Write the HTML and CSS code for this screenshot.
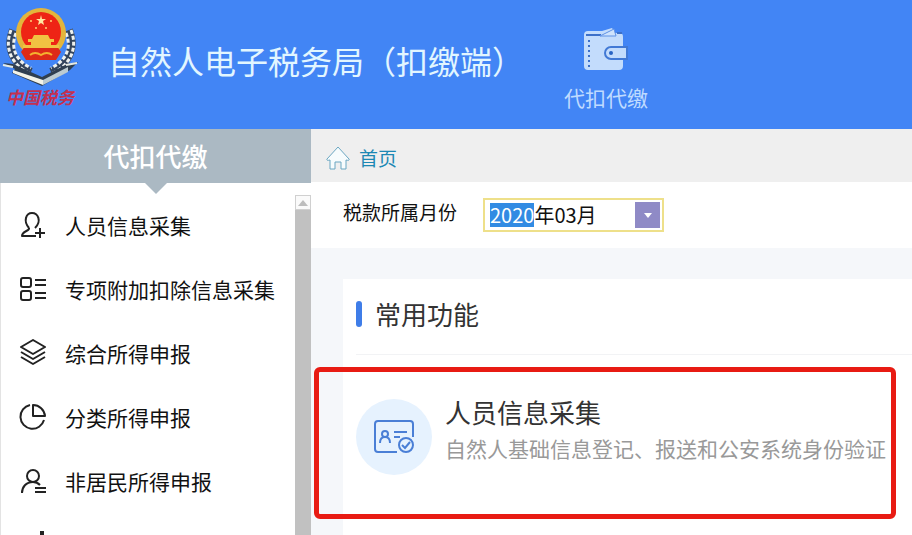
FILE: index.html
```html
<!DOCTYPE html>
<html lang="zh-CN">
<head>
    <meta charset="UTF-8">
    <meta name="viewport" content="width=device-width, initial-scale=1.0">
    <title>自然人电子税务局（扣缴端）</title>
    <link rel="stylesheet" href="styles.css">
</head>
<body>
    <div class="app">
        <header class="header">
            <div class="logo">
                <svg class="emblem" viewBox="0 0 78 82" aria-hidden="true">
                    <!-- Wheat wreath -->
                    <g fill="none" stroke="#33445c" stroke-width="8">
                        <path d="M12 26C5 44 12 60 30 68"/>
                        <path d="M68 26C75 44 68 60 50 68"/>
                    </g>
                    <g fill="none" stroke="#eef1ee" stroke-width="3" stroke-dasharray="4 2">
                        <path d="M10 26C3 44 10 61 30 70"/>
                        <path d="M70 26C77 44 70 61 50 70"/>
                        <path d="M15 29C9 44 15 57 30 64"/>
                        <path d="M65 29C71 44 65 57 50 64"/>
                    </g>
                    <!-- Book -->
                    <path d="M2 59l10 1 29 13 25-13 11-2-8 8-28 16L11 69l3-4z" fill="#2f3f50"/>
                    <path d="M12 66l30 10v5L12 69z" fill="#f3f3e8"/>
                    <path d="M42 76l25-13v5L42 81z" fill="#bccbd1"/>
                    <path d="M2 61l10 2M65 61l11-2" stroke="#e4eae4" stroke-width="2"/>
                    <!-- National emblem -->
                    <circle cx="40" cy="29" r="25" fill="#e3b53c"/>
                    <circle cx="40" cy="28" r="20" fill="#ee2415"/>
                    <path d="M20 48l4-6h32l4 6-5 8H25z" fill="#dd2a18"/>
                    <path d="M40 11l1 4h4l-3 2 1 4-3-2-3 2 1-4-3-2h4z" fill="#ffe7a2"/>
                    <g fill="#ffd277">
                        <circle cx="30" cy="17" r="1"/>
                        <circle cx="50" cy="17" r="1"/>
                        <circle cx="35" cy="24" r="1"/>
                        <circle cx="45" cy="24" r="1"/>
                    </g>
                    <path d="M33 31h14l2 4h4v3h-3v3h8v3H22v-3h8v-3h-3v-3h4z" fill="#f1c342"/>
                    <path d="M29 51q5-4 11 0 6-4 11 0" fill="none" stroke="#f4b32f" stroke-width="2"/>
                </svg>
                <span class="logo-text">中国税务</span>
            </div>
            <h1 class="title">自然人电子税务局（扣缴端）</h1>
            <a class="module" href="#">
                <svg width="44" height="42" viewBox="0 0 44 42" aria-hidden="true">
                    <path d="M4 2h14l10-3 3 5h5q3 0 3 4v29q0 4-4 4H4q-4 0-4-4V6q0-4 4-4z" fill="#c3dcfc"/>
                    <path d="M2 6h15M33 4h5" stroke="#3c70c9" stroke-width="2"/>
                    <path d="M16 7l14-7 2 7z" fill="#cfe3fc" stroke="#5f92e6"/>
                    <path d="M5 11v27" stroke="#3c70c9" stroke-width="2" stroke-dasharray="2 3"/>
                    <path d="M43 18H27a6 6 0 0 0 0 12h16z" fill="#c3dcfc" stroke="#4179d5" stroke-width="2"/>
                    <circle cx="27" cy="24" r="2" fill="#2864c4"/>
                </svg>
                <span>代扣代缴</span>
            </a>
        </header>

        <div class="body">
            <!-- Left menu -->
            <aside class="sidebar">
                <h2 class="sidebar-title">代扣代缴</h2>
                <div class="sidebar-body">
                    <nav class="menu">
                        <a class="menu-item" href="#">
                            <svg class="menu-icon" viewBox="0 0 28 28" aria-hidden="true">
                                <path d="M10 17C4 10 7 2 13 2s10 8 3 15M10 17c1 3-7 3-7 8h14M21 17v10M16 22h10"/>
                            </svg>
                            人员信息采集
                        </a>
                        <a class="menu-item" href="#">
                            <svg class="menu-icon" viewBox="0 0 28 28" aria-hidden="true">
                                <rect x="2" y="3" width="10" height="9" rx="2"/>
                                <rect x="2" y="16" width="10" height="9" rx="2"/>
                                <path d="M16 5h11M16 10h11M16 18h11M16 23h11"/>
                            </svg>
                            专项附加扣除信息采集
                        </a>
                        <a class="menu-item" href="#">
                            <svg class="menu-icon" viewBox="0 0 28 28" aria-hidden="true">
                                <path d="M14 1l12 7-12 7L2 8zM2 13l12 7 12-7M2 18l12 7 12-7"/>
                            </svg>
                            综合所得申报
                        </a>
                        <a class="menu-item" href="#">
                            <svg class="menu-icon" viewBox="0 0 28 28" aria-hidden="true">
                                <path d="M11 2a12 12 0 1 0 14 15M14 2v11h12A12 12 0 0 0 14 2z"/>
                            </svg>
                            分类所得申报
                        </a>
                        <a class="menu-item" href="#">
                            <svg class="menu-icon" viewBox="0 0 28 28" aria-hidden="true">
                                <circle cx="14" cy="9" r="6"/>
                                <path d="M3 26c0-6 4-11 11-11 3 0 5 1 7 3M16 21h11M16 25h11"/>
                            </svg>
                            非居民所得申报
                        </a>
                        <a class="menu-item" href="#">
                            <svg class="menu-icon" viewBox="0 0 28 28" aria-hidden="true">
                                <path d="M23 0v26M15 9v17M7 14v12" stroke-width="4"/>
                            </svg>
                            限售股所得申报
                        </a>
                    </nav>
                    <div class="scrollbar">
                        <button class="scroll-up" type="button" aria-label="向上滚动"></button>
                    </div>
                </div>
            </aside>

            <!-- Main area -->
            <main class="main">
                <div class="breadcrumb">
                    <a href="#">
                        <svg width="26" height="26" viewBox="0 0 26 26" aria-hidden="true">
                            <path d="M13 2L2 14q-1 2 3 1v9h5v-7h6v7h5v-9q4 1 3-1z" fill="#f7fcfd" stroke="#6ba7c2"/>
                        </svg>
                        首页
                    </a>
                </div>
                <form class="filter">
                    <label for="period">税款所属月份</label>
                    <div class="picker">
                        <input id="period" type="text" value="2020年03月" autocomplete="off" spellcheck="false">
                        <button class="picker-btn" type="button" aria-label="选择月份"></button>
                    </div>
                </form>
                <section class="card">
                    <h2 class="card-title">常用功能</h2>
                    <a class="feature" href="#">
                        <span class="feature-icon">
                            <svg width="40" height="34" viewBox="0 0 40 34" fill="none" stroke="#4a7fd6" stroke-width="2" aria-hidden="true">
                                <path d="M23 32H4q-3 0-3-3V4q0-3 3-3h32q3 0 3 3v13"/>
                                <circle cx="11" cy="14" r="3"/>
                                <path d="M6 23c0-4 2-6 5-6s5 2 5 6M20 12h13M20 17h6"/>
                                <circle cx="32" cy="25" r="7"/>
                                <path d="M28 25l3 3 5-6"/>
                            </svg>
                        </span>
                        <span class="feature-text">
                            <strong>人员信息采集</strong>
                            <span>自然人基础信息登记、报送和公安系统身份验证</span>
                        </span>
                    </a>
                </section>
            </main>
        </div>
    </div>

    <script>
        // start on the year part of the period
        const period = document.getElementById('period');
        period.focus();
        period.setSelectionRange(0, 4);
    </script>
</body>
</html>
```
FILE: styles.css
```css
* {
    box-sizing: border-box;
}

body {
    margin: 0;
    font-family: "Noto Sans CJK SC", sans-serif;
    color: #111;
    background: #f5f7fa;
    overflow: hidden;
}

h1,
h2 {
    margin: 0;
    font-weight: normal;
}

a {
    color: inherit;
    text-decoration: none;
}

.app {
    display: flex;
    flex-direction: column;
    height: 100vh;
}

/* Header */
.header {
    display: flex;
    flex: none;
    align-items: flex-start;
    height: 129px;
    background: #4285f5;
    color: #e2f6ff;
}

.logo {
    display: flex;
    flex-direction: column;
    align-items: center;
    width: 80px;
    padding-top: 4px;
}

.emblem {
    width: 78px;
    height: 82px;
}

.logo-text {
    font-family: "Liberation Serif", "Noto Sans CJK SC", serif;
    font-size: 17px;
    font-style: italic;
    font-weight: bold;
    line-height: 26px;
    color: #c4304f;
}

.title {
    padding: 36px 0 0 28px;
    font-size: 32px;
    line-height: 48px;
    white-space: nowrap;
}

.module {
    display: flex;
    flex-direction: column;
    align-items: center;
    gap: 11px;
    padding-top: 29px;
    margin-left: 40px;
    font-size: 21px;
    line-height: 30px;
    color: #bfdbff;
}

.module svg {
    overflow: visible;
}

.body {
    display: flex;
    flex: 1;
    min-height: 0;
}

/* Left menu */
.sidebar {
    display: flex;
    flex: none;
    flex-direction: column;
    width: 311px;
    background: #fff;
}

.sidebar-title {
    position: relative;
    flex: none;
    font-size: 26px;
    font-weight: 500;
    line-height: 54px;
    text-align: center;
    color: #fff;
    background: #abb9c3;
}

.sidebar-title::after {
    content: "";
    position: absolute;
    top: 100%;
    left: 50%;
    border: 11px solid transparent;
    border-top-color: #abb9c3;
    border-bottom: 0;
    transform: translateX(-50%);
}

.sidebar-body {
    display: flex;
    flex: 1;
    min-height: 0;
    padding-top: 12px;
    border-left: 1px solid #e3e3e3;
    overflow: hidden;
}

.menu {
    flex: 1;
    margin-top: -2px;
}

.menu-item {
    display: flex;
    align-items: center;
    gap: 18px;
    height: 64px;
    padding-left: 18px;
    font-size: 21px;
    white-space: nowrap;
}

.menu-icon {
    width: 28px;
    height: 28px;
    fill: none;
    stroke: #222;
    stroke-width: 2;
    stroke-linejoin: round;
}

.scrollbar {
    width: 16px;
    background: #c1c1c1;
}

.scroll-up {
    display: flex;
    align-items: center;
    justify-content: center;
    width: 16px;
    height: 15px;
    padding: 0;
    border: 1px solid #d0d0d0;
    background: #fafafa;
}

.scroll-up::before {
    content: "";
    border: 5px solid transparent;
    border-top: 0;
    border-bottom: 6px solid #bdbdbd;
}

/* Main area */
.main {
    flex: 1;
    min-width: 0;
}

.breadcrumb {
    display: flex;
    align-items: center;
    height: 53px;
    padding: 4px 14px 0;
    background: #efefef;
}

.breadcrumb a {
    display: flex;
    align-items: center;
    gap: 8px;
    font-size: 19px;
    color: #1c88b4;
}

.filter {
    display: flex;
    gap: 26px;
    padding: 16px 32px;
    background: #fff;
}

.filter label {
    font-size: 19px;
    line-height: 28px;
}

.picker {
    display: flex;
    align-items: center;
    width: 181px;
    height: 34px;
    padding: 2px;
    border: 2px solid #eee08a;
    background: #fff;
}

.picker input {
    flex: 1;
    width: 0;
    padding: 0 3px;
    border: 0;
    outline: 0;
    font-family: inherit;
    font-size: 20px;
    line-height: 24px;
    color: #111;
}

.picker input::selection {
    color: #fff;
    background: #318be3;
}

.picker-btn {
    display: flex;
    align-items: center;
    justify-content: center;
    width: 25px;
    height: 26px;
    padding: 0;
    border: 0;
    background: #8f8ac6;
}

.picker-btn::before {
    content: "";
    border: 4px solid transparent;
    border-top: 5px solid #fff;
    border-bottom: 0;
}

/* Common functions */
.card {
    min-height: 256px;
    margin: 31px 0 0 32px;
    padding-left: 13px;
    background: #fff;
}

.card-title {
    display: flex;
    align-items: center;
    gap: 13px;
    height: 76px;
    padding-bottom: 6px;
    border-bottom: 1px solid #f2f3f5;
    font-size: 26px;
    color: #333;
}

.card-title::before {
    content: "";
    width: 6px;
    height: 26px;
    border-radius: 3px;
    background: #3f7de8;
}

.feature {
    position: relative;
    display: flex;
    gap: 13px;
    margin: 12px 16px 0 0;
    padding: 32px 0 44px;
}

/* Red frame reaches past the card's left edge */
.feature::after {
    content: "";
    position: absolute;
    inset: 0 0 0 -42px;
    border: 5px solid #e81b13;
    border-radius: 6px;
}

.feature-icon {
    display: flex;
    flex: none;
    align-items: center;
    justify-content: center;
    width: 76px;
    height: 76px;
    border-radius: 50%;
    background: #e6f2fe;
}

.feature-text {
    display: flex;
    flex-direction: column;
    gap: 4px;
    font-size: 21px;
    line-height: 38px;
    color: #999;
    white-space: nowrap;
}

.feature-text strong {
    font-size: 26px;
    font-weight: normal;
    line-height: 26px;
    color: #333;
}
```
